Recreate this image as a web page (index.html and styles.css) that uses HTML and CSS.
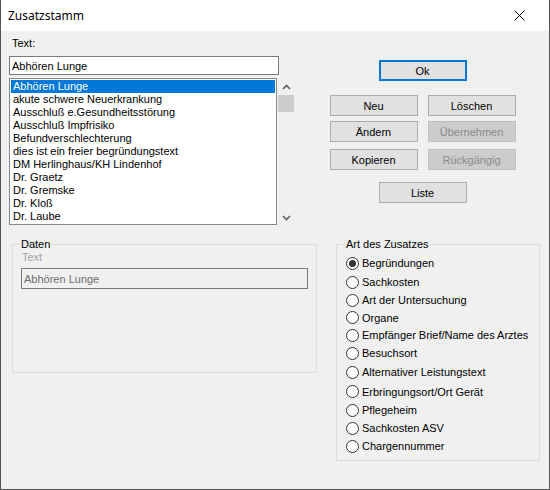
FILE: index.html
```html
<!DOCTYPE html>
<html lang="de">
<head>
  <meta charset="UTF-8" />
  <title>Zusatzstamm</title>
  <link rel="stylesheet" href="styles.css">
</head>
<body>
  <div class="window">
    <div class="titlebar">
      <span class="title">Zusatzstamm</span>
      <button class="close" aria-label="Schließen">
        <svg width="11" height="11" viewBox="0 0 11 11"><path d="M0.5 0.5 L10.5 10.5 M10.5 0.5 L0.5 10.5" stroke="#000" stroke-width="1" fill="none"/></svg>
      </button>
    </div>

    <div class="content">
      <div class="top">
        <div class="left-col">
          <label class="field-label" for="text">Text:</label>
          <input id="text" class="textbox" value="Abhören Lunge">
          <div class="list-wrap">
            <ul class="listbox">
              <li class="selected">Abhören Lunge</li>
              <li>akute schwere Neuerkrankung</li>
              <li>Ausschluß e.Gesundheitsstörung</li>
              <li>Ausschluß Impfrisiko</li>
              <li>Befundverschlechterung</li>
              <li>dies ist ein freier begründungstext</li>
              <li>DM Herlinghaus/KH Lindenhof</li>
              <li>Dr. Graetz</li>
              <li>Dr. Gremske</li>
              <li>Dr. Kloß</li>
              <li>Dr. Laube</li>
            </ul>
            <div class="scrollbar">
              <svg class="arrow" width="9" height="6" viewBox="0 0 9 6"><path d="M1 5 L4.5 1.5 L8 5" stroke="#606060" stroke-width="1.6" fill="none"/></svg>
              <div class="thumb"></div>
              <div class="track"></div>
              <svg class="arrow" width="9" height="6" viewBox="0 0 9 6"><path d="M1 1 L4.5 4.5 L8 1" stroke="#606060" stroke-width="1.6" fill="none"/></svg>
            </div>
          </div>
        </div>

        <div class="right-col">
          <button class="btn btn-default">Ok</button>
          <div class="btn-grid">
            <button class="btn">Neu</button>
            <button class="btn">Löschen</button>
            <button class="btn">Ändern</button>
            <button class="btn" disabled>Übernehmen</button>
            <button class="btn row3">Kopieren</button>
            <button class="btn row3" disabled>Rückgängig</button>
          </div>
          <button class="btn btn-list">Liste</button>
        </div>
      </div>

      <div class="bottom">
        <fieldset class="group group-data">
          <legend>Daten</legend>
          <div class="disabled-label">Text</div>
          <input class="textbox textbox-disabled" value="Abhören Lunge" disabled>
        </fieldset>

        <fieldset class="group group-kind">
          <legend>Art des Zusatzes</legend>
          <div class="opt tall"><span class="radio checked"></span>Begründungen</div>
          <div class="opt"><span class="radio"></span>Sachkosten</div>
          <div class="opt"><span class="radio"></span>Art der Untersuchung</div>
          <div class="opt short"><span class="radio"></span>Organe</div>
          <div class="opt"><span class="radio"></span>Empfänger Brief/Name des Arztes</div>
          <div class="opt"><span class="radio"></span>Besuchsort</div>
          <div class="opt tall"><span class="radio"></span>Alternativer Leistungstext</div>
          <div class="opt mid"><span class="radio"></span>Erbringungsort/Ort Gerät</div>
          <div class="opt"><span class="radio"></span>Pflegeheim</div>
          <div class="opt"><span class="radio"></span>Sachkosten ASV</div>
          <div class="opt"><span class="radio"></span>Chargennummer</div>
        </fieldset>
      </div>
    </div>
  </div>
</body>
</html>
```

FILE: styles.css
```css
:root {
  --face: #f0f0f0;
  --btn: #e1e1e1;
  --btn-border: #adadad;
  --accent: #0078d7;
  --frame: #dcdcdc;
}

* {
  box-sizing: border-box;
}

body {
  margin: 0;
  font-family: 'Liberation Sans', Arial, sans-serif;
  font-size: 11px;
  color: #000;
}

.window {
  width: 550px;
  height: 490px;
  border: 1px solid #555;
  border-top: none;
  background: var(--face);
  display: flex;
  flex-direction: column;
}

.titlebar {
  height: 31px;
  background: #fff;
  display: flex;
  align-items: center;
  justify-content: space-between;
  padding-left: 7px;
}

.title {
  font-family: 'Noto Sans', sans-serif;
  font-size: 12px;
  margin-top: -1px;
}

.close {
  width: 46px;
  height: 30px;
  margin-right: 7px;
  border: none;
  background: none;
  padding: 0;
  display: flex;
  align-items: center;
  justify-content: center;
}

.content {
  flex: 1;
}

.top {
  display: flex;
}

.left-col {
  margin-left: 8px;
  padding-top: 6px;
  width: 285px;
  display: flex;
  flex-direction: column;
}

.field-label {
  display: block;
  line-height: 13px;
  padding-left: 3px;
}

.textbox {
  margin-top: 6px;
  width: 270px;
  height: 19px;
  border: 1px solid #7a7a7a;
  background: #fff;
  font: inherit;
  padding: 0 2px;
  color: #000;
}

.list-wrap {
  margin-top: 3px;
  display: flex;
}

.listbox {
  list-style: none;
  margin: 0;
  padding: 1px;
  width: 268px;
  height: 147px;
  overflow: hidden;
  border: 1px solid #828790;
  background: #fff;
}

.listbox li {
  height: 13px;
  line-height: 13px;
  padding-left: 2px;
  white-space: nowrap;
}

.listbox li.selected {
  background: var(--accent);
  color: #fff;
}

.scrollbar {
  margin-left: 1px;
  width: 16px;
  display: flex;
  flex-direction: column;
  align-items: center;
  padding-top: 6px;
  padding-bottom: 4px;
}

.thumb {
  margin-top: 5px;
  width: 16px;
  height: 17px;
  background: #cdcdcd;
}

.track {
  flex: 1;
}

.right-col {
  margin-left: 35px;
  width: 187px;
  display: flex;
  flex-direction: column;
  align-items: center;
  padding-top: 29px;
}

.btn {
  width: 88px;
  height: 21px;
  border: 1px solid var(--btn-border);
  background: var(--btn);
  font: inherit;
  color: #000;
  padding: 0;
}

.btn:disabled {
  background: #cccccc;
  border-color: #bfbfbf;
  color: #8b8b8b;
}

.btn-default {
  border: 2px solid var(--accent);
}

.btn-grid {
  margin-top: 14px;
  display: grid;
  grid-template-columns: 88px 88px;
  column-gap: 10px;
  row-gap: 5px;
}

.btn-grid .row3 {
  margin-top: 2px;
}

.btn-list {
  margin-top: 12px;
}

.bottom {
  display: flex;
  margin-top: 13px;
  padding-left: 11px;
}

.group {
  margin: 0;
  min-width: 0;
  border: 1px solid var(--frame);
  padding: 0 0 0 9px;
}

.group legend {
  padding: 0 1px;
  margin-left: -1px;
  line-height: 13px;
}

.group-data {
  width: 305px;
  height: 135px;
  padding-left: 8px;
}

.disabled-label {
  color: #a0a0a0;
  line-height: 13px;
  padding-left: 1px;
}

.textbox-disabled {
  margin-top: 4px;
  width: 287px;
  height: 21px;
  background: var(--face);
  border-color: #7a7a7a;
  color: #6d6d6d;
}

.group-kind {
  margin-left: 19px;
  width: 204px;
  padding-bottom: 5px;
}

.opt {
  height: 18px;
  display: flex;
  align-items: center;
  gap: 3px;
}

.opt:first-of-type {
  margin-top: 2px;
}

.opt.tall {
  height: 20px;
}

.opt.mid {
  height: 19px;
}

.opt.short {
  height: 17px;
}

.radio {
  width: 13px;
  height: 13px;
  border: 1px solid #333;
  border-radius: 50%;
  background: #fff;
  display: flex;
  align-items: center;
  justify-content: center;
}

.radio.checked::after {
  content: "";
  width: 7px;
  height: 7px;
  border-radius: 50%;
  background: #333;
}
```
